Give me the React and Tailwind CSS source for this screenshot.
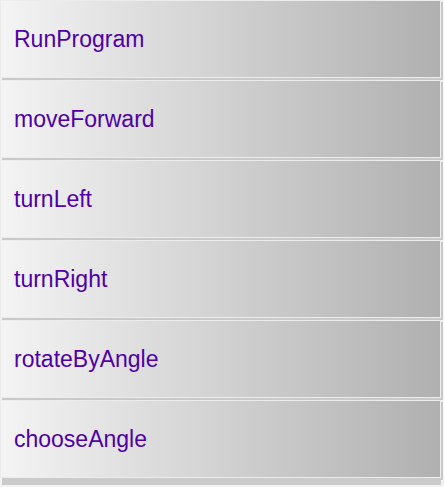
import React from 'react';

const items = ['RunProgram', 'moveForward', 'turnLeft', 'turnRight', 'rotateByAngle', 'chooseAngle'];

const App = () => {
  return (
    <div className="w-[444px] h-[487px] bg-[#f2f2f2] overflow-hidden" style={{ fontFamily: '"Liberation Sans", Arial, sans-serif' }}>
      <div className="flex flex-col w-[441px]">
        {items.map((item) => (
          <div
            key={item}
            className="h-[78px] mb-[2px] flex items-center pl-[13px] border border-[#ececec] bg-gradient-to-r from-[#f4f4f4] to-[#b0b0b0] shadow-[2px_2px_0_#c9c9c9] text-[23px] text-[#5000a6]"
          >
            {item}
          </div>
        ))}
        {/* bottom shadow strip */}
        <div className="h-[7px] ml-[2px] -mt-[2px] bg-[#cbcbcb]" />
      </div>
    </div>
  );
};

export default App;
